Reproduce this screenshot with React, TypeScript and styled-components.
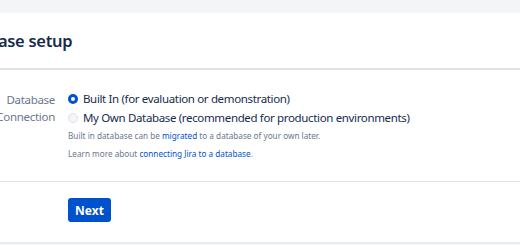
import styled, { createGlobalStyle } from 'styled-components'

const GlobalStyle = createGlobalStyle`
  html, body {
    margin: 0;
    padding: 0;
    background: #f4f5f7;
    overflow: hidden;
  }
  body {
    font-family: 'Noto Sans', 'Open Sans', sans-serif;
    color: #172b4d;
  }
`

const Page = styled.div`
  box-sizing: border-box;
  padding-top: 13px;
  width: 520px;
  height: 245px;
  overflow: hidden;
`

const Card = styled.div`
  margin-left: -100px;
  width: 720px;
  background: #fff;
  border-bottom: 2px solid #ebecf0;
`

const Header = styled.div`
  height: 55px;
  display: flex;
  align-items: center;
  padding-left: 51px;
  border-bottom: 2px solid #dfe1e6;
`

const Title = styled.h2`
  margin: 0;
  font-size: 16.5px;
  font-weight: 600;
  color: #172b4d;
  letter-spacing: -0.3px;
`

const Form = styled.div`
  display: grid;
  grid-template-columns: 155px 1fr;
  column-gap: 13px;
  padding: 19px 0 18px;
  border-bottom: 1px solid #dfe1e6;
`

const Label = styled.div`
  text-align: right;
  font-size: 11.5px;
  line-height: 17px;
  letter-spacing: -0.3px;
  color: #6b778c;
  padding-top: 2px;
`

const Field = styled.div`
  display: flex;
  flex-direction: column;
`

const RadioRow = styled.label`
  display: flex;
  align-items: center;
  gap: 5px;
  height: 19px;
  font-size: 11.5px;
  letter-spacing: -0.35px;
  color: #172b4d;
`

const Radio = styled.span<{ $checked?: boolean }>`
  box-sizing: border-box;
  width: 10px;
  height: 10px;
  border-radius: 50%;
  flex: none;
  background: ${(p) => (p.$checked ? '#fff' : '#f4f5f7')};
  border: ${(p) => (p.$checked ? '3px solid #0052cc' : '1px solid #dfe1e6')};
`

const Help = styled.div`
  font-size: 8.2px;
  line-height: 18px;
  color: #6b778c;
`

const Link = styled.a`
  color: #0052cc;
  text-decoration: none;
`

const Footer = styled.div`
  display: grid;
  grid-template-columns: 155px 1fr;
  column-gap: 13px;
  padding: 16px 0 20px;
`

const Button = styled.button`
  display: block;
  width: 43px;
  height: 24px;
  border: none;
  border-radius: 3px;
  background: #0052cc;
  color: #fff;
  font-family: inherit;
  font-size: 12px;
  font-weight: 700;
  padding: 0;
`

export default function App() {
  return (
    <Page>
      <GlobalStyle />
      <Card>
        <Header>
          <Title>Database setup</Title>
        </Header>
        <Form>
          <Label>
            Database
            <br />
            Connection
          </Label>
          <Field>
            <RadioRow>
              <Radio $checked />
              Built In (for evaluation or demonstration)
            </RadioRow>
            <RadioRow>
              <Radio />
              My Own Database (recommended for production environments)
            </RadioRow>
            <Help>
              Built in database can be <Link href="#">migrated</Link> to a database of your own later.
            </Help>
            <Help>
              Learn more about <Link href="#">connecting Jira to a database</Link>.
            </Help>
          </Field>
        </Form>
        <Footer>
          <span />
          <div>
            <Button>Next</Button>
          </div>
        </Footer>
      </Card>
    </Page>
  )
}
